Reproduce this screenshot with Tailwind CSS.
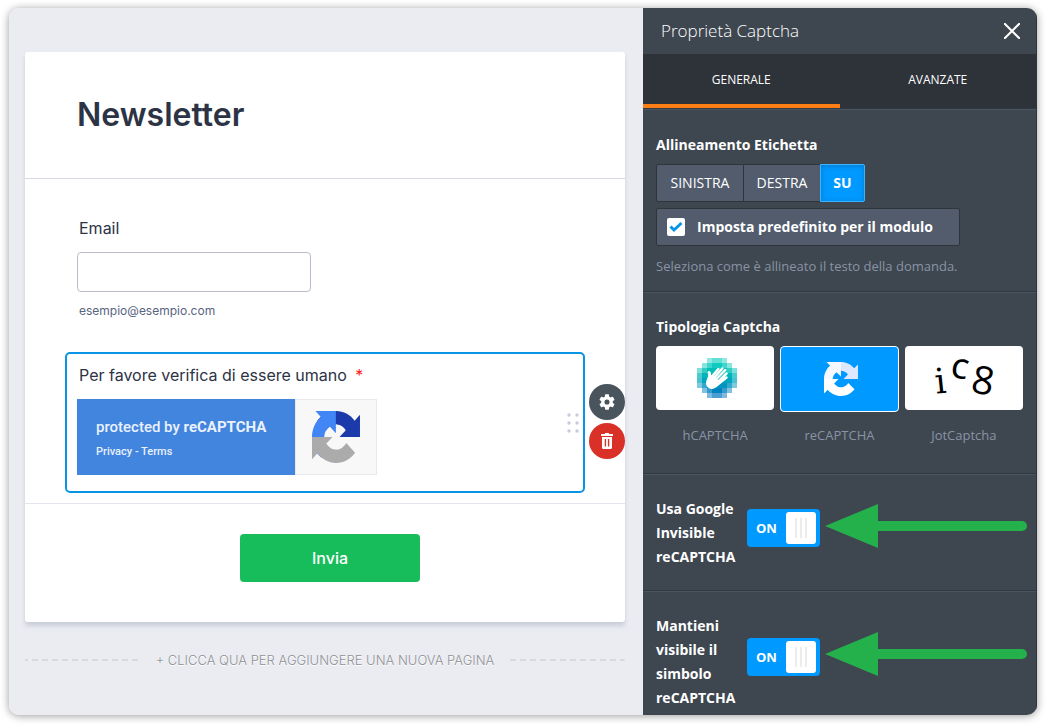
<!DOCTYPE html>
<html lang="it">
  <head>
    <meta charset="UTF-8" />
    <meta name="viewport" content="width=device-width, initial-scale=1.0" />
    <title>Newsletter - Proprietà Captcha</title>
    <script src="https://cdn.jsdelivr.net/npm/@tailwindcss/browser@4"></script>
  </head>
  <body class="min-h-screen flex bg-white px-[9px] pt-2 pb-[10px] font-['Inter',sans-serif]">
    <!-- shared symbols -->
    <svg class="hidden">
      <symbol id="recaptcha" viewBox="0 0 64 64" preserveAspectRatio="none">
        <path fill="var(--dark)" d="M64 31.955l-.033-1.37V4.687l-7.16 7.16C50.948 4.674 42.033.093 32.05.093c-10.4 0-19.622 4.96-25.458 12.64l11.736 11.86a15.55 15.55 0 0 1 4.754-5.334c2.05-1.6 4.952-2.906 8.968-2.906.485 0 .86.057 1.135.163 4.976.393 9.288 3.14 11.828 7.124l-8.307 8.307L64 31.953" />
        <path fill="var(--light)" d="M31.862.094l-1.37.033H4.594l7.16 7.16C4.58 13.147 0 22.06 0 32.046c0 10.4 4.96 19.622 12.64 25.458L24.5 45.768a15.55 15.55 0 0 1-5.334-4.754c-1.6-2.05-2.906-4.952-2.906-8.968 0-.485.057-.86.163-1.135.393-4.976 3.14-9.288 7.124-11.828l8.307 8.307L31.86.095" />
        <path fill="var(--base)" d="M.001 32.045l.033 1.37v25.898l7.16-7.16c5.86 7.173 14.774 11.754 24.76 11.754 10.4 0 19.622-4.96 25.458-12.64l-11.736-11.86a15.55 15.55 0 0 1-4.754 5.334c-2.05 1.6-4.952 2.906-8.968 2.906-.485 0-.86-.057-1.135-.163-4.976-.393-9.288-3.14-11.828-7.124l8.307-8.307c-10.522.04-22.4.066-27.295-.005" />
      </symbol>
      <symbol id="arrow" viewBox="0 0 202 44">
        <path fill="#24b04b" d="M0 22 53 0v17h144a5 5 0 0 1 0 10H53v17z" />
      </symbol>
    </svg>

    <div class="flex flex-1 rounded-[10px] overflow-hidden shadow-[0_1px_8px_rgba(0,0,0,0.4)]">
      <!-- form builder -->
      <main class="flex-1 min-w-0 bg-[#ebecf2] pl-4 pr-[18px] pt-11 text-[#2c3345]">
        <form class="bg-white rounded-[3px] shadow-[0_4px_4px_rgba(87,100,126,0.21)]">
          <header class="px-[52px] py-[39px] border-b border-[#d7d8e1]">
            <h1 class="text-[32px] leading-[48px] font-semibold">Newsletter</h1>
          </header>

          <div class="px-10 pt-[37px] pb-[10px] border-b border-[#e3e4ec]">
            <div class="px-3">
              <label for="email" class="block pl-[2px] text-base">Email</label>
              <input id="email" type="email" class="block mt-3 w-[234px] h-10 px-2 border border-[#b8bdc9] rounded-[4px] outline-none" />
              <p class="pl-[2px] mt-[10px] text-xs leading-[18px] text-[#57647e]">esempio@esempio.com</p>
            </div>

            <div class="relative mt-8 h-[141px] border-2 border-[#0a94e6] rounded-[5px] px-[10px] pt-[9px]">
              <p class="pl-[2px] text-base">Per favore verifica di essere umano <span class="ml-1 text-[#ff1a1a]">*</span></p>
              <div class="mt-3 flex w-[300px] h-[76px]">
                <div class="flex-1 bg-[#4285de] pl-[19px] pt-4 text-[#eaf1fc] font-['Roboto',sans-serif]">
                  <p class="text-[15px] leading-6 font-medium whitespace-nowrap">protected by <b>reCAPTCHA</b></p>
                  <p class="mt-1 text-[11px] leading-[18px] font-medium">
                    <a href="#privacy">Privacy</a> - <a href="#terms">Terms</a>
                  </p>
                </div>
                <div class="w-[82px] bg-[#f8f8f8] border border-[#e9e9e9] pl-4 pt-[11px]">
                  <svg class="w-12 h-[52px] [--dark:#1c3aa9] [--light:#4285f4] [--base:#ababab]"><use href="#recaptcha" /></svg>
                </div>
              </div>

              <!-- drag handle -->
              <svg class="absolute right-1 top-[58px]" width="12" height="22" fill="#c8cbdb">
                <circle cx="2" cy="3" r="1.7" /><circle cx="10" cy="3" r="1.7" />
                <circle cx="2" cy="11" r="1.7" /><circle cx="10" cy="11" r="1.7" />
                <circle cx="2" cy="19" r="1.7" /><circle cx="10" cy="19" r="1.7" />
              </svg>

              <!-- question actions -->
              <div class="absolute -right-[42px] top-[30px] flex flex-col gap-[3px]">
                <button type="button" aria-label="Proprietà" class="size-9 rounded-full bg-[#4a545d] flex items-center justify-center">
                  <svg width="16" height="16" viewBox="2 2 20 20" fill="#fff"><path d="M19.14 12.94c.04-.3.06-.61.06-.94 0-.32-.02-.64-.07-.94l2.03-1.58a.49.49 0 0 0 .12-.61l-1.92-3.32a.49.49 0 0 0-.59-.22l-2.39.96c-.5-.38-1.03-.7-1.62-.94l-.36-2.54a.48.48 0 0 0-.48-.41h-3.84c-.24 0-.43.17-.47.41l-.36 2.54c-.59.24-1.13.57-1.62.94l-2.39-.96a.48.48 0 0 0-.59.22L2.74 8.87c-.12.21-.08.47.12.61l2.03 1.58c-.05.3-.09.63-.09.94s.02.64.07.94l-2.03 1.58a.49.49 0 0 0-.12.61l1.92 3.32c.12.22.37.29.59.22l2.39-.96c.5.38 1.03.7 1.62.94l.36 2.54c.05.24.24.41.48.41h3.84c.24 0 .44-.17.47-.41l.36-2.54c.59-.24 1.13-.56 1.62-.94l2.39.96c.22.08.47 0 .59-.22l1.92-3.32a.48.48 0 0 0-.12-.61zM12 15.2a3.2 3.2 0 1 1 0-6.4 3.2 3.2 0 0 1 0 6.4z" /></svg>
                </button>
                <button type="button" aria-label="Elimina" class="size-9 rounded-full bg-[#d93027] flex items-center justify-center">
                  <svg width="12" height="16" viewBox="0 0 12 16" fill="#fff" fill-rule="evenodd"><path d="M4 0h4v1h4v2H0V1h4zM1 4h10v10.500a1.500 1.500 0 0 1-1.500 1.500h-7A1.500 1.500 0 0 1 1 14.500zm2.700 2v7.500h1.400V6zm3.200 0v7.500h1.400V6z" /></svg>
                </button>
              </div>
            </div>
          </div>

          <div class="flex justify-center pt-[30px] pb-10 pl-[10px]">
            <button type="button" class="w-[180px] h-12 rounded-[4px] bg-[#18bd5b] text-white text-base font-medium">Invia</button>
          </div>
        </form>

        <div class="mt-7 flex items-center gap-4">
          <svg class="flex-1 min-w-0 h-[2px]"><line x1="-3" x2="100%" y1="1" y2="1" stroke="#d8d9dd" stroke-width="2" stroke-dasharray="6 4" /></svg>
          <button type="button" class="text-[13px] leading-5 font-light text-[#8f9194] whitespace-nowrap [text-shadow:0_1px_0_#fff]">+ CLICCA QUA PER AGGIUNGERE UNA NUOVA PAGINA</button>
          <svg class="flex-1 min-w-0 h-[2px]"><line x1="0" x2="100%" y1="1" y2="1" stroke="#d8d9dd" stroke-width="2" stroke-dasharray="6 4" /></svg>
        </div>
      </main>

      <!-- properties panel -->
      <aside class="w-[394px] shrink-0 bg-[#3e4650] text-white text-sm font-['Open_Sans',sans-serif] border-r border-[#2e353d]">
        <div class="h-[46px] flex items-center justify-between pl-[18px] pr-4">
          <h2 class="text-[17px] font-light">Proprietà Captcha</h2>
          <button type="button" aria-label="Chiudi">
            <svg width="16" height="16" stroke="#fff" stroke-width="2"><path d="M0 0 16 16M16 0 0 16" /></svg>
          </button>
        </div>
        <nav class="grid grid-cols-2 bg-[#2e3239] text-xs">
          <button type="button" class="h-[54px] pt-[2px] border-b-4 border-[#ff7f17]">GENERALE</button>
          <button type="button" class="h-[54px] pt-[2px] border-b-4 border-transparent">AVANZATE</button>
        </nav>

        <section class="border-t border-[#303942] shadow-[inset_0_1px_0_#4a5560] px-[13px] pt-6 h-[183px]">
          <h3 class="font-bold leading-6">Allineamento Etichetta</h3>
          <div class="mt-[7px] flex h-[38px]">
            <button type="button" class="w-[88px] border border-[#2e353d] bg-[#525c6d] rounded-l-[2px]">SINISTRA</button>
            <button type="button" class="w-[76px] border-y border-[#2e353d] bg-[#525c6d]">DESTRA</button>
            <button type="button" class="w-[45px] border border-[#40b3ff] bg-[#0099ff] rounded-r-[2px] font-bold shadow-[inset_0_1px_5px_rgba(0,0,0,0.2)]">SU</button>
          </div>
          <label class="mt-[6px] w-[304px] h-[38px] flex items-center gap-3 pl-[10px] border border-[#2e353d] bg-[#525c6d] rounded-[2px] font-bold">
            <span class="relative size-[18px] flex">
              <input type="checkbox" checked class="appearance-none size-[18px] bg-white rounded-[2px]" />
              <svg class="absolute left-[2px] top-[3px]" width="14" height="12" fill="none" stroke="#0a94e6" stroke-width="3"><path d="M1.500 5.500 5 9l7.500-7" /></svg>
            </span>
            Imposta predefinito per il modulo
          </label>
          <p class="mt-[10px] text-[13px] leading-5 text-[#8894a4]">Seleziona come è allineato il testo della domanda.</p>
        </section>

        <section class="border-t border-[#303942] shadow-[inset_0_1px_0_#4a5560] px-[13px] pt-[23px] h-[182px]">
          <h3 class="font-bold leading-6">Tipologia Captcha</h3>
          <div class="mt-[7px] grid grid-cols-3 gap-[6px] text-[13px] text-[#8894a4] text-center">
            <label>
              <input type="radio" name="captcha" class="sr-only" />
              <span class="h-16 bg-white rounded-[4px] flex items-center justify-center">
                <svg class="ml-1" width="40" height="40">
                  <g id="pixels" shape-rendering="crispEdges"></g>
                  <g stroke="#fff" stroke-linecap="round" fill="none">
                    <path stroke-width="2.500" d="M14.500 19 21.300 11M17 20l8.300-9.500M19.500 21l8.800-9M21 24l8.500-8.500M20 27l9.500-7.500" />
                    <path stroke-width="3" d="M12 14.500c1.500 2 .5 5-.5 8" />
                    <path stroke="none" fill="#fff" d="M10.500 20c1-2 2-2.500 4-2.500l3 .5 5.500 6-2 3.500c-3 4-8 4.500-10.500 1.500-2-2-2-5.500 0-9z" />
                  </g>
                </svg>
              </span>
              <span class="block mt-[15px] leading-5">hCAPTCHA</span>
            </label>
            <label>
              <input type="radio" name="captcha" checked class="sr-only" />
              <span class="h-[66px] -mb-[2px] bg-[#0099ff] border border-white rounded-[4px] flex items-center justify-center">
                <svg class="ml-1 size-[34px] [--dark:#dce8ff] [--light:#f5f9ff] [--base:#ffffff]"><use href="#recaptcha" /></svg>
              </span>
              <span class="block mt-[15px] leading-5">reCAPTCHA</span>
            </label>
            <label>
              <input type="radio" name="captcha" class="sr-only" />
              <span class="h-16 bg-white rounded-[4px] flex items-center justify-center">
                <svg width="100" height="64" fill="#000">
                  <text x="22" y="47" font-size="35" font-family="DejaVu Serif, serif" transform="rotate(-6 28 48)">i</text>
                  <text x="37" y="32" font-size="27" font-weight="600" font-family="Open Sans, sans-serif" transform="rotate(10 44 24)">C</text>
                  <text x="58" y="48" font-size="39" font-weight="500" font-family="Open Sans, sans-serif" transform="rotate(10 68 34)">8</text>
                </svg>
              </span>
              <span class="block mt-[15px] leading-5">JotCaptcha</span>
            </label>
          </div>
        </section>

        <section class="border-t border-[#303942] shadow-[inset_0_1px_0_#4a5560] px-[13px] pt-[23px] h-[117px] flex">
          <label for="invisible" class="w-[91px] shrink-0 font-bold leading-6">Usa Google Invisible reCAPTCHA</label>
          <label class="mt-3 w-[73px] shrink-0 h-[38px] flex items-center justify-between rounded-[4px] bg-[#0099ff] pl-[9px] pr-1 text-[13px] font-bold">
            <input id="invisible" type="checkbox" role="switch" checked class="sr-only" />ON
            <span class="w-[30px] h-8 rounded-[3px] bg-white flex items-center justify-center gap-[3px]">
              <i class="w-[2px] h-5 bg-[#ececec]"></i><i class="w-[2px] h-5 bg-[#ececec]"></i><i class="w-[2px] h-5 bg-[#ececec]"></i>
            </span>
          </label>
          <svg class="ml-[5px] mt-[7px] w-[202px] h-11 shrink-0"><use href="#arrow" /></svg>
        </section>

        <section class="border-t border-[#303942] shadow-[inset_0_1px_0_#4a5560] px-[13px] pt-[23px] flex">
          <label for="badge" class="w-[91px] shrink-0 font-bold leading-6">Mantieni visibile il simbolo reCAPTCHA</label>
          <label class="mt-6 w-[73px] shrink-0 h-[38px] flex items-center justify-between rounded-[4px] bg-[#0099ff] pl-[9px] pr-1 text-[13px] font-bold">
            <input id="badge" type="checkbox" role="switch" checked class="sr-only" />ON
            <span class="w-[30px] h-8 rounded-[3px] bg-white flex items-center justify-center gap-[3px]">
              <i class="w-[2px] h-5 bg-[#ececec]"></i><i class="w-[2px] h-5 bg-[#ececec]"></i><i class="w-[2px] h-5 bg-[#ececec]"></i>
            </span>
          </label>
          <svg class="ml-[5px] mt-[18px] w-[202px] h-11 shrink-0"><use href="#arrow" /></svg>
        </section>
      </aside>
    </div>

    <script>
      // hCaptcha mosaic: 8x8 squares, lighter towards the rim
      const rows = ["..1221..", ".134431.", "13444431", "24444442", "24444442", "13444431", ".134431.", "..1221.."];
      const colors = ["#1fd3c6", "#0fcbc0", "#00bfb7", "#00b5b9", "#00a6bd", "#0095bf", "#0083bf", "#0074bf"];
      const opacity = { 1: 0.5, 2: 0.7, 3: 0.8, 4: 1 };
      let squares = "";
      rows.forEach((row, y) => {
        [...row].forEach((cell, x) => {
          if (cell === ".") return;
          squares += `<rect x="${x * 5}" y="${y * 5}" width="5" height="5" fill="${colors[y]}" opacity="${opacity[cell]}" />`;
        });
      });
      document.getElementById("pixels").innerHTML = squares;
    </script>
  </body>
</html>
